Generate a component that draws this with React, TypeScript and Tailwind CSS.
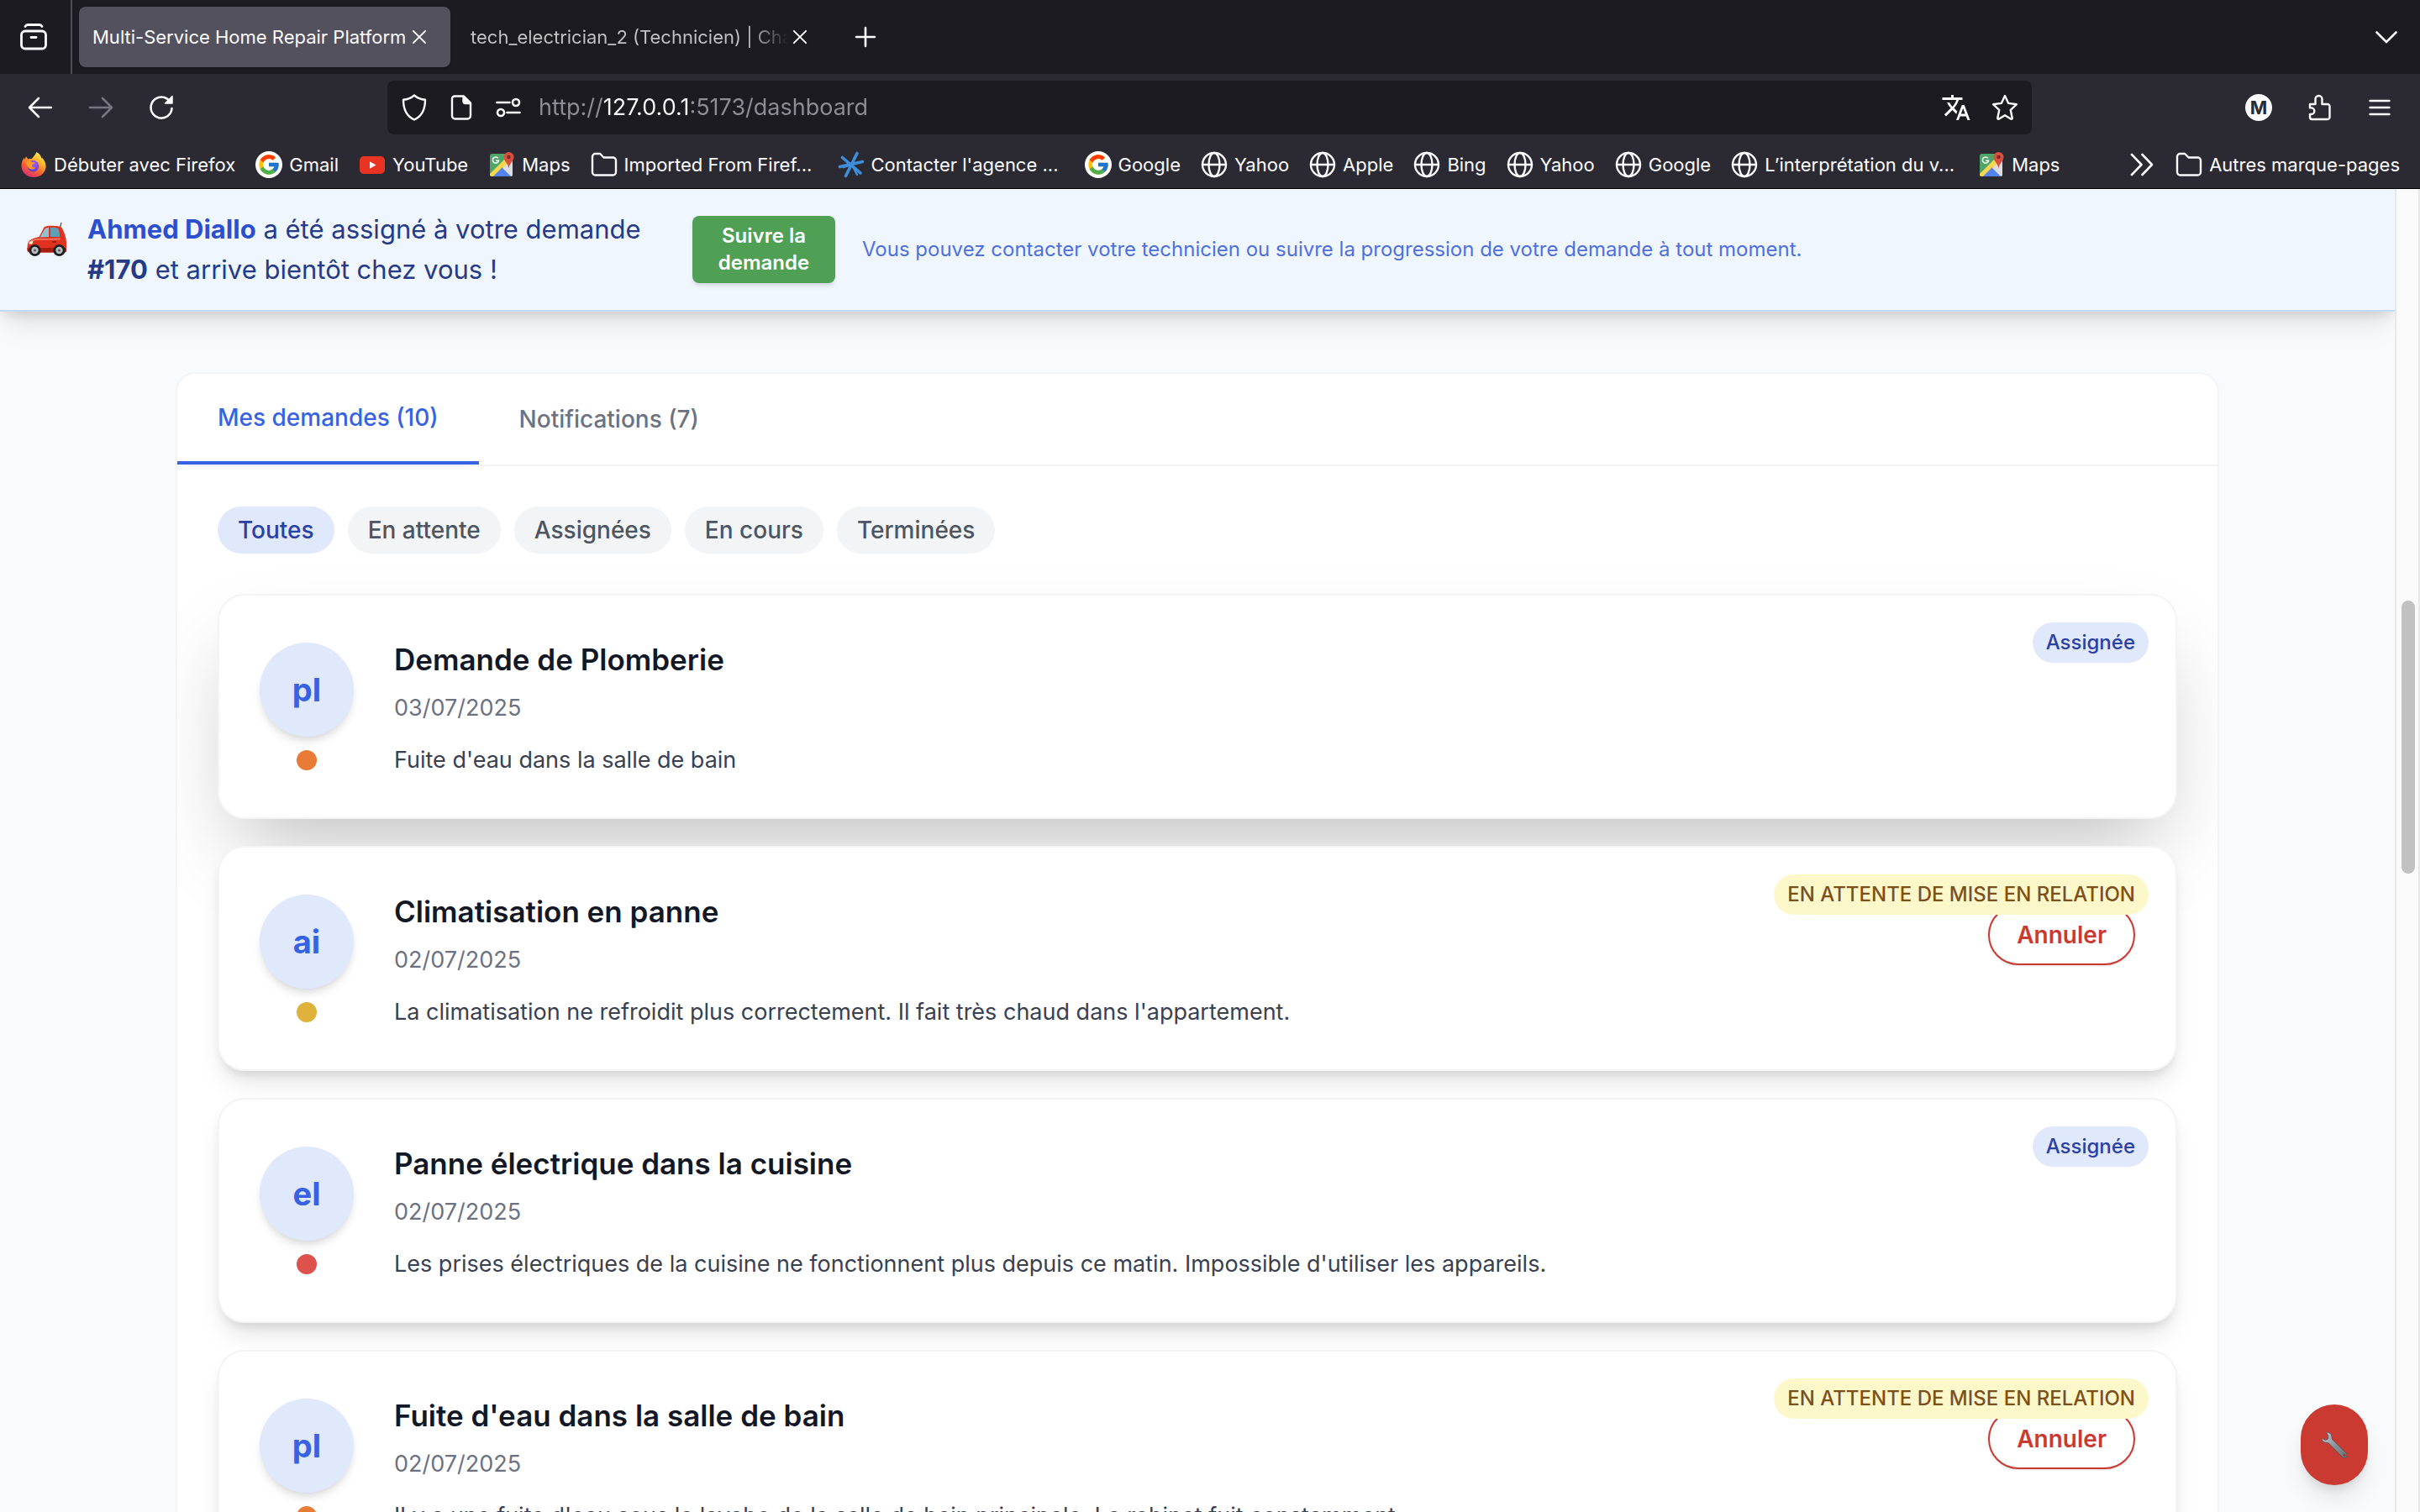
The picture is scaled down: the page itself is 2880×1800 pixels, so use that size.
import React from "react";
import type { ReactNode } from "react";
import { FcGoogle } from "react-icons/fc";
import { MdTranslate } from "react-icons/md";

/* ---------- Browser icons ---------- */

type LineProps = { className?: string; width?: number; children: ReactNode };

function Line({ className = "size-8", width = 2.4, children }: LineProps) {
  return (
    <svg
      aria-hidden="true"
      viewBox="0 0 32 32"
      fill="none"
      stroke="currentColor"
      strokeWidth={width}
      strokeLinecap="round"
      strokeLinejoin="round"
      className={`shrink-0 ${className}`}
    >
      {children}
    </svg>
  );
}

const RecentIcon = () => (
  <Line width={2.8}>
    <rect x="1.5" y="9" width="29" height="21" rx="4.5" />
    <path d="M6 3.5c.6-1.300 1.600-2 3-2h14c1.400 0 2.400.7 3 2M13 16.500h6" />
  </Line>
);

const CloseIcon = () => (
  <Line className="size-5" width={3}>
    <path d="M4.500 4.500l23 23M27.500 4.500l-23 23" />
  </Line>
);

const BackIcon = () => (
  <Line width={2.6}>
    <path d="M29 16H3.500M14 5L3 16l11 11" />
  </Line>
);

const ForwardIcon = () => (
  <Line width={2.6}>
    <path d="M3 16h25.500M18 5l11 11-11 11" />
  </Line>
);

const ReloadIcon = () => (
  <Line width={2.6}>
    <path d="M28.500 17A12.500 12.500 0 1 1 23 5.700L26 8" />
    <path d="M29 2.500v8.500h-8.500z" fill="currentColor" strokeWidth="1.500" />
  </Line>
);

const ShieldIcon = () => (
  <Line>
    <path d="M16 1.500c-3.500 3-8 4.800-13 5.300 0 11 3.500 19.500 13 23.700 9.500-4.200 13-12.700 13-23.700-5-.5-9.500-2.300-13-5.300z" />
  </Line>
);

const PageIcon = () => (
  <Line>
    <path d="M8 2.500h11l8 8V26a3.500 3.500 0 0 1-3.500 3.500h-15A3.500 3.500 0 0 1 5 26V5.500a3 3 0 0 1 3-3z" />
    <path d="M18.500 3v5.500a2.500 2.500 0 0 0 2.500 2.500h5.500z" fill="currentColor" />
  </Line>
);

const PermissionsIcon = () => (
  <Line width={2.600}>
    <path d="M2.500 10h15M14.500 22h15" />
    <circle cx="25" cy="10" r="4" />
    <circle cx="7" cy="22" r="4" />
  </Line>
);

const StarIcon = () => (
  <Line>
    <path d="M16 2l4.200 8.900 9.800 1.300-7.200 6.700 1.900 9.700c.1.900-.6 1.500-1.400 1.100L16 25.200l-7.300 4.500c-.8.4-1.500-.2-1.400-1.100l1.900-9.700L2 12.200l9.800-1.300z" />
  </Line>
);

const ExtensionsIcon = () => (
  <Line>
    <path d="M5 12h6.500V6a4 4 0 0 1 8 0v6H26a2.500 2.500 0 0 1 2.500 2.500v13A2.500 2.500 0 0 1 26 30H7.500A2.500 2.500 0 0 1 5 27.500V24h1.500a3.800 3.800 0 0 0 0-7.600H5z" />
  </Line>
);

const MenuIcon = () => (
  <Line width={2.400}>
    <path d="M4.500 8h23M4.500 16h23M4.500 24h23" />
  </Line>
);

const FolderIcon = () => (
  <Line width={2.400}>
    <path d="M2 6.500A3.500 3.500 0 0 1 5.500 3h5.700l4.300 4.500h11A3.500 3.500 0 0 1 30 11v14a3.500 3.500 0 0 1-3.500 3.500h-21A3.500 3.500 0 0 1 2 25z" />
  </Line>
);

const GlobeIcon = () => (
  <Line width={2.400}>
    <circle cx="16" cy="16" r="14" />
    <ellipse cx="16" cy="16" rx="6.500" ry="14" />
    <path d="M2 16h28" />
  </Line>
);

const GoogleIcon = () => (
  <span className="flex size-8 shrink-0 items-center justify-center rounded-full bg-white">
    <FcGoogle className="size-7" aria-hidden="true" />
  </span>
);

const YouTubeIcon = () => (
  <svg aria-hidden="true" viewBox="0 0 32 32" className="size-8 shrink-0">
    <rect x="1" y="6" width="30" height="21" rx="5" fill="#e93323" />
    <path d="M13 12.200v8.600l7.500-4.300z" fill="#fff" />
  </svg>
);

const MapsIcon = () => (
  <svg aria-hidden="true" viewBox="0 0 32 32" className="size-8 shrink-0">
    <defs>
      <clipPath id="maps-tile">
        <rect x="2" y="3" width="27" height="27" rx="2.500" />
      </clipPath>
    </defs>
    <g clipPath="url(#maps-tile)">
      <rect x="2" y="3" width="27" height="27" fill="#4fa467" />
      <path d="M29 8L15 20l14 12z" fill="#dcdde0" />
      <path d="M2 27L22 7l4 4L7 31H2z" fill="#f8d84a" />
      <path d="M5 31l11.500-11.500L28 31z" fill="#5383ec" />
    </g>
    <path
      d="M11.800 8.300a3.600 3.600 0 1 0 .7 3H9.200"
      fill="none"
      stroke="#fff"
      strokeWidth="1.500"
    />
    <path
      d="M24.500 1a6 6 0 0 0-6 6c0 5 5 7 6 13.500C25.500 14 30.500 12 30.500 7a6 6 0 0 0-6-6z"
      fill="#d8503f"
    />
    <circle cx="24.500" cy="7" r="2.200" fill="#7d2a22" />
  </svg>
);

const BurstIcon = () => (
  <svg
    aria-hidden="true"
    viewBox="0 0 32 32"
    fill="none"
    stroke="#3f8edb"
    strokeWidth="3.600"
    strokeLinecap="round"
    className="size-8 shrink-0"
  >
    <path d="M23 2.500L9.500 29.500M5.500 7.500L27 26M2.500 18.500L29.500 12.500" />
    <path d="M16 16l-9 3M17 16l6 12" strokeWidth="2.500" />
  </svg>
);

const FirefoxIcon = () => (
  <svg aria-hidden="true" viewBox="0 0 32 32" className="size-8 shrink-0">
    <defs>
      <linearGradient id="fx-body" x1="0.800" y1="0" x2="0.250" y2="1">
        <stop offset="0" stopColor="#fff35a" />
        <stop offset="0.350" stopColor="#ffb02e" />
        <stop offset="0.650" stopColor="#f9622f" />
        <stop offset="1" stopColor="#d42a7c" />
      </linearGradient>
      <radialGradient id="fx-globe" cx="0.600" cy="0.300" r="0.800">
        <stop offset="0" stopColor="#a25bff" />
        <stop offset="1" stopColor="#4a3bc4" />
      </radialGradient>
    </defs>
    <path
      d="M19.500 1c4 2.200 5.300 5 5.800 7.300 1-.2 1.700.4 2.200 1.200C30 13 31 16 30.500 19.500 29.500 26.500 23.500 31 16 31 8 31 1.500 25 1.500 17.500c0-4 1.300-7.200 3.500-9.700l.5 2.500 1.500-4 2.300 3.200c1.700-.6 3-.5 4.200-.2 2-2.300 4.500-4.800 6-8.300z"
      fill="url(#fx-body)"
    />
    <circle cx="15.500" cy="17.800" r="6.800" fill="url(#fx-globe)" />
    <path
      d="M7.500 12.500c2.700-1.500 5.500-.8 7 .5l3.200.5c.4 1.600-2.700 1.600-3.400 3-.8 1.900 1.300 3.600 4.200 2.700-1.200 2.800-5.800 3.300-8.300.8-2-2-3.200-5-2.700-7.500z"
      fill="#ff9a2b"
    />
  </svg>
);

/* ---------- Page illustrations ---------- */

const CarIcon = () => (
  <svg role="img" aria-label="Voiture" viewBox="0 0 48 48" className="mt-3 size-12 shrink-0">
    <path d="M39 12l2-8" stroke="#444" strokeWidth="1.200" />
    <path
      d="M2 26.500c4-3.500 8-4.500 12.500-5.500L20 10.500c1-1.700 3-2.700 8-2.700 8 0 11.500.7 13.500 2.200C44.500 15 46.500 21 47 27v10c0 1.700-1 2.500-2.500 2.500H4C1.500 39.500.5 38 .5 36c0-4 .3-7 1.500-9.500z"
      fill="#e0321f"
    />
    <path d="M15.500 21.500L21 12c.8-1.200 2-2 5-2.200V21z" fill="#8fc3d4" />
    <path d="M28 9.800c5 0 7.500.3 9 1.200 1.500 2.500 2 6 2.200 10H28z" fill="#5f9fb5" />
    <path d="M2.500 27.500c5-3.500 11-4 16-3.500L40 23.500" fill="none" stroke="#f7836f" strokeWidth="1.500" />
    <path d="M.5 34h46.500v3c0 1.700-1 2.500-2.500 2.500H4C1.500 39.500.5 38 .5 36z" fill="#a81d12" />
    <path d="M3 27l4.500-1.500-1 4H2.400z" fill="#fff3d6" />
    <path d="M30 27h5" stroke="#8e1a10" strokeWidth="1.500" />
    <g>
      <circle cx="9.500" cy="37" r="7" fill="#1f1f22" />
      <circle cx="9.500" cy="37" r="4.200" fill="#b9bcc0" />
      <circle cx="9.500" cy="37" r="1.500" fill="#55585c" />
      <circle cx="38.500" cy="37" r="7" fill="#1f1f22" />
      <circle cx="38.500" cy="37" r="4.200" fill="#b9bcc0" />
      <circle cx="38.500" cy="37" r="1.500" fill="#55585c" />
    </g>
  </svg>
);

const WrenchIcon = () => (
  <svg aria-hidden="true" viewBox="0 0 32 32" className="size-8">
    <defs>
      <linearGradient id="wrench-steel" x1="0" y1="0" x2="1" y2="1">
        <stop offset="0" stopColor="#c9cfd6" />
        <stop offset="0.500" stopColor="#8d949c" />
        <stop offset="1" stopColor="#6a7078" />
      </linearGradient>
    </defs>
    <path
      d="M6.500 1.200c3.500-.6 6.800 2.300 6.500 6.300-.1 1 .2 1.700.8 2.300l16.500 16.200a3.300 3.300 0 0 1-4.700 4.700L9.800 14.500c-.6-.6-1.300-.9-2.200-.9-3.900.1-6.600-2.300-6.500-5.800l4.200 2.700 3.300-1.600.2-3.600z"
      fill="url(#wrench-steel)"
      stroke="#4c5157"
      strokeWidth="0.800"
    />
    <circle cx="27.900" cy="28.300" r="1.500" fill="#b32f27" />
  </svg>
);

/* ---------- Browser chrome ---------- */

type Bookmark = { label: string; icon: ReactNode; long?: boolean };

const bookmarks: Bookmark[] = [
  { label: "Débuter avec Firefox", icon: <FirefoxIcon /> },
  { label: "Gmail", icon: <GoogleIcon /> },
  { label: "YouTube", icon: <YouTubeIcon /> },
  { label: "Maps", icon: <MapsIcon /> },
  { label: "Imported From Firef...", icon: <FolderIcon />, long: true },
  { label: "Contacter l'agence ...", icon: <BurstIcon />, long: true },
  { label: "Google", icon: <GoogleIcon /> },
  { label: "Yahoo", icon: <GlobeIcon /> },
  { label: "Apple", icon: <GlobeIcon /> },
  { label: "Bing", icon: <GlobeIcon /> },
  { label: "Yahoo", icon: <GlobeIcon /> },
  { label: "Google", icon: <GlobeIcon /> },
  { label: "L’interprétation du v...", icon: <GlobeIcon />, long: true },
  { label: "Maps", icon: <MapsIcon /> },
];

function TabStrip() {
  return (
    <div className="flex h-22 items-stretch bg-[#1c1b22]">
      <button type="button" aria-label="Activité récente" className="flex w-21 items-center justify-center pr-1">
        <RecentIcon />
      </button>
      <div className="w-0.5 bg-[#4d4c57]" />
      <div role="tablist" className="flex items-center pl-2">
        <div className="flex h-18 w-[442px] items-center gap-1.5 rounded-lg bg-[#53515d] pr-5 pl-4 shadow-sm">
          <button type="button" role="tab" aria-selected="true" className="shrink-0 text-left whitespace-nowrap">
            Multi-Service Home Repair Platform
          </button>
          <button type="button" aria-label="Fermer l'onglet">
            <CloseIcon />
          </button>
        </div>
        <div className="flex h-18 w-[442px] items-center gap-1 pr-4 pl-6">
          <button
            type="button"
            role="tab"
            aria-selected="false"
            className="min-w-0 flex-1 overflow-hidden bg-linear-to-r from-[#c4c4c8] from-88% to-transparent bg-clip-text text-left whitespace-nowrap text-transparent"
          >
            tech_electrician_2 (Technicien) | Chat
          </button>
          <button type="button" aria-label="Fermer l'onglet">
            <CloseIcon />
          </button>
        </div>
      </div>
      <button type="button" aria-label="Nouvel onglet" className="ml-9 flex items-center">
        <Line width={2.600}>
          <path d="M16 5v22M5 16h22" />
        </Line>
      </button>
      <button type="button" aria-label="Lister tous les onglets" className="mr-6 ml-auto flex items-center">
        <Line width={2.600}>
          <path d="M4.500 10.500L16 22l11.500-11.500" />
        </Line>
      </button>
    </div>
  );
}

function NavBar() {
  return (
    <div className="grid h-20 grid-cols-[461px_1fr_462px] items-center">
      <div className="flex items-center gap-10 pl-8">
        <button type="button" aria-label="Page précédente">
          <BackIcon />
        </button>
        <button type="button" aria-label="Page suivante" disabled className="text-[#77767f]">
          <ForwardIcon />
        </button>
        <button type="button" aria-label="Actualiser">
          <ReloadIcon />
        </button>
      </div>
      <div className="flex h-16 items-center gap-6 rounded-lg bg-[#1c1b22] px-4">
        <ShieldIcon />
        <PageIcon />
        <div className="flex min-w-0 flex-1 items-center gap-5">
          <PermissionsIcon />
          <input
            type="text"
            aria-label="Adresse"
            defaultValue="http://127.0.0.1:5173/dashboard"
            className="min-w-0 flex-1 bg-[linear-gradient(90deg,#8f8e96_77px,#fbfbfe_77px,#fbfbfe_180px,#8f8e96_180px)] bg-clip-text text-[27px] text-transparent outline-none"
          />
        </div>
        <button type="button" aria-label="Traduire cette page">
          <MdTranslate className="size-9" />
        </button>
        <button type="button" aria-label="Marquer cette page">
          <StarIcon />
        </button>
      </div>
      <div className="flex items-center justify-end gap-10 pr-8">
        <button
          type="button"
          aria-label="Compte"
          className="flex size-8 items-center justify-center rounded-full bg-[#fbfbfe] font-bold text-[#2b2a33]"
        >
          M
        </button>
        <button type="button" aria-label="Extensions">
          <ExtensionsIcon />
        </button>
        <button type="button" aria-label="Menu">
          <MenuIcon />
        </button>
      </div>
    </div>
  );
}

function BookmarkLink({ label, icon, long }: Bookmark) {
  return (
    <a href="#" className="flex shrink-0 items-center gap-2 whitespace-nowrap">
      {icon}
      <span className={long ? "w-[230px]" : ""}>{label}</span>
    </a>
  );
}

function BookmarksBar() {
  return (
    <div className="flex h-14 items-center gap-6 px-6">
      {bookmarks.map((b, i) => (
        <BookmarkLink key={i} {...b} />
      ))}
      <button type="button" aria-label="Afficher plus de marque-pages" className="ml-auto">
        <Line width={2.600}>
          <path d="M4 4l11.500 12L4 28M16.500 4L28 16 16.500 28" />
        </Line>
      </button>
      <BookmarkLink label="Autres marque-pages" icon={<FolderIcon />} />
    </div>
  );
}

/* ---------- Dashboard ---------- */

function AssignmentBanner() {
  return (
    <section className="relative z-10 flex items-center gap-8 border-b-2 border-[#c3dafb] bg-[#eff6fe] px-8 py-6 shadow-[0_20px_30px_-6px_rgba(0,0,0,0.1),0_8px_12px_-4px_rgba(0,0,0,0.1)]">
      <div className="flex w-[760px] shrink-0 items-start gap-6">
        <CarIcon />
        <p className="text-[31px] leading-12 text-[#263a87]">
          <strong className="font-bold text-[#2b50cf]">Ahmed Diallo</strong> a été assigné à votre demande{" "}
          <strong className="font-bold">#170</strong> et arrive bientôt chez vous !
        </p>
      </div>
      <button
        type="button"
        className="w-[170px] shrink-0 rounded-lg bg-[#4fa055] px-6 py-2 text-2xl leading-8 font-semibold text-white shadow-md"
      >
        Suivre la demande
      </button>
      <p className="text-2xl leading-8 text-[#4f70df]">
        Vous pouvez contacter votre technicien ou suivre la progression de votre demande à tout moment.
      </p>
    </section>
  );
}

type Status = "assigned" | "pending";

type ServiceRequest = {
  code: string;
  title: string;
  date: string;
  description: string;
  status: Status;
  dot: string;
  shadow: string;
};

const restingShadow = "shadow-[0_20px_30px_-6px_rgba(0,0,0,0.1),0_8px_12px_-4px_rgba(0,0,0,0.1)]";
const raisedShadow = "shadow-[0_50px_100px_-24px_rgba(0,0,0,0.25)]";

const requests: ServiceRequest[] = [
  {
    code: "pl",
    title: "Demande de Plomberie",
    date: "03/07/2025",
    description: "Fuite d'eau dans la salle de bain",
    status: "assigned",
    dot: "bg-[#e87b35]",
    shadow: raisedShadow,
  },
  {
    code: "ai",
    title: "Climatisation en panne",
    date: "02/07/2025",
    description: "La climatisation ne refroidit plus correctement. Il fait très chaud dans l'appartement.",
    status: "pending",
    dot: "bg-[#dfb23b]",
    shadow: restingShadow,
  },
  {
    code: "el",
    title: "Panne électrique dans la cuisine",
    date: "02/07/2025",
    description:
      "Les prises électriques de la cuisine ne fonctionnent plus depuis ce matin. Impossible d'utiliser les appareils.",
    status: "assigned",
    dot: "bg-[#dd524c]",
    shadow: restingShadow,
  },
  {
    code: "pl",
    title: "Fuite d'eau dans la salle de bain",
    date: "02/07/2025",
    description:
      "Il y a une fuite d'eau sous le lavabo de la salle de bain principale. Le robinet fuit constamment.",
    status: "pending",
    dot: "bg-[#e87b35]",
    shadow: restingShadow,
  },
];

const badges: Record<Status, { label: string; style: string }> = {
  assigned: { label: "Assignée", style: "bg-[#dfe9fb] text-[#2940a6]" },
  pending: { label: "EN ATTENTE DE MISE EN RELATION", style: "bg-[#fdf8c9] text-[#7d4f1d]" },
};

function RequestCard({ code, title, date, description, status, dot, shadow }: ServiceRequest) {
  const badge = badges[status];
  return (
    <article
      className={`relative flex items-center gap-12 rounded-[32px] border-2 border-[#f3f4f6] bg-white p-12 ${shadow}`}
    >
      <div className="flex flex-col items-center gap-4">
        <div className="flex size-28 items-center justify-center rounded-full bg-[#dfe9fb] text-[38px] font-bold text-[#3662e3] shadow-[0_8px_12px_-2px_rgba(0,0,0,0.1),0_4px_8px_-4px_rgba(0,0,0,0.1)]">
          {code}
        </div>
        <span className={`size-6 rounded-full ${dot}`} />
      </div>
      <div className="min-w-0 flex-1">
        <h3 className="text-[35px] leading-14 font-semibold text-[#131827]">{title}</h3>
        <p className="mt-2 text-[27px] leading-11 text-[#6c727f]">{date}</p>
        <p className="mt-5 text-[27px] leading-10 text-[#394150]">{description}</p>
      </div>
      {status === "pending" && (
        <button
          type="button"
          className="mt-5 h-18 self-start rounded-full border-2 border-[#cb3a31] bg-white px-8 text-[28px] font-semibold text-[#cb3a31] shadow-sm"
        >
          Annuler
        </button>
      )}
      <span className={`absolute top-8 right-8 rounded-full px-4 py-2 text-2xl leading-8 font-medium ${badge.style}`}>
        {badge.label}
      </span>
    </article>
  );
}

const filters = ["Toutes", "En attente", "Assignées", "En cours", "Terminées"];

function RequestsPanel() {
  return (
    <section className="mx-auto max-w-[2432px] overflow-hidden rounded-[24px] border-2 border-[#f3f4f6] bg-white">
      <div role="tablist" className="flex h-[110px] border-b-2 border-[#f3f4f6] text-[28px] font-medium">
        <button
          type="button"
          role="tab"
          aria-selected="true"
          className="border-b-4 border-[#3662e3] px-12 text-[#3662e3]"
        >
          Mes demandes (10)
        </button>
        <button type="button" role="tab" aria-selected="false" className="px-12 text-[#6c727f]">
          Notifications (7)
        </button>
      </div>
      <div className="flex flex-col gap-12 p-12">
        <div className="flex gap-4 text-[28px] leading-10 font-medium">
          {filters.map((f, i) => (
            <button
              key={f}
              type="button"
              aria-pressed={i === 0}
              className={
                i === 0
                  ? "rounded-full bg-[#dfe9fb] px-6 py-2 text-[#2940a6]"
                  : "rounded-full bg-[#f3f4f6] px-6 py-2 text-[#4d5562]"
              }
            >
              {f}
            </button>
          ))}
        </div>
        <div className="flex flex-col gap-8">
          {requests.map((r, i) => (
            <RequestCard key={i} {...r} />
          ))}
        </div>
      </div>
    </section>
  );
}

export default function App() {
  return (
    <div className="flex h-screen flex-col overflow-hidden font-['Inter',sans-serif]">
      <header className="shrink-0 border-b border-black bg-[#2b2a33] text-[22px] text-[#fbfbfe]">
        <TabStrip />
        <NavBar />
        <BookmarksBar />
      </header>
      <div className="relative flex min-h-0 flex-1">
        <main className="min-w-0 flex-1 overflow-hidden bg-[#f9fafc]">
          <AssignmentBanner />
          <div className="px-16 pt-18">
            <RequestsPanel />
          </div>
        </main>
        <div aria-hidden="true" className="w-[30px] shrink-0 border-x-2 border-[#e8e8e8] bg-[#fafafa] px-1.5 pt-[490px]">
          <div className="h-[325px] w-4 rounded-full bg-[#c1c1c1]" />
        </div>
        <button
          type="button"
          aria-label="Demander une réparation"
          className="absolute right-[62px] bottom-8 flex h-24 w-20 items-center justify-center rounded-full bg-[#cb3a31] shadow-[0_20px_30px_-6px_rgba(0,0,0,0.1),0_8px_12px_-4px_rgba(0,0,0,0.1)]"
        >
          <WrenchIcon />
        </button>
      </div>
    </div>
  );
}
